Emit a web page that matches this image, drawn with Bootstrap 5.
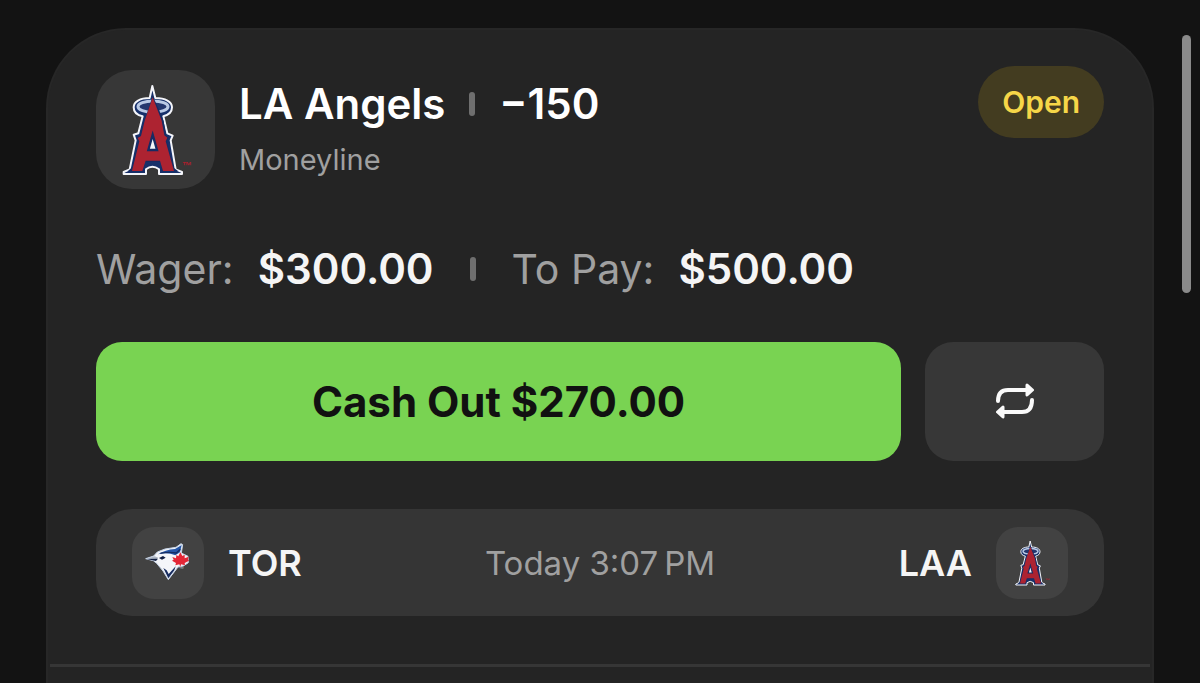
<!DOCTYPE html>
<html lang="en" data-bs-theme="dark">
<head>
<meta charset="utf-8">
<meta name="viewport" content="width=device-width, initial-scale=1">
<title>Bet slip</title>
<link href="https://cdn.jsdelivr.net/npm/bootstrap@5.3.0/dist/css/bootstrap.min.css" rel="stylesheet">
<style>
  body { background: #131313; font-family: Inter, "Liberation Sans", sans-serif; color: #f5f5f5; padding: 28px 46px 0; }
  .slip { background: #242424; border: 2px solid #272727; border-bottom: 0; border-radius: 80px 80px 0 0; }
  .slip-body { padding: 36px 48px 48px; }
  .tile { background: #373737; width: 119px; height: 119px; border-radius: 36px; margin-top: 4px; }
  .tile-sm { background: #424242; width: 72px; height: 72px; border-radius: 22px; }
  .title-lg { font-size: 42px; line-height: 52px; font-weight: 600; }
  .soft { color: #a0a0a0; font-size: 41px; font-weight: 400; }
  .kind { font-size: 29px; line-height: 36px; color: #a0a0a0; margin-top: 12px; }
  .sep { width: 6px; height: 24px; border-radius: 3px; background: #6f6f6f; }
  .status { background: #433c20; color: #f6d648; font-size: 30px; line-height: 36px; font-weight: 600; padding: 18px 24px; border-radius: 36px; }
  .stakes { margin-top: 54px; margin-bottom: 47px; }
  .stakes .sep { margin: 0 36px; }
  .btn-tall { height: 119px; border: 0; border-radius: 26px; }
  .btn-cash { background: #79d352; color: #111; font-size: 42px; font-weight: 700; }
  .btn-cash:hover { background: #88dd63; color: #111; }
  .btn-again { background: #373737; width: 179px; border-radius: 28px; }
  .game { background: #353535; border-radius: 36px; padding: 18px 36px 17px; margin-top: 48px; }
  .team { font-size: 36px; line-height: 44px; font-weight: 600; }
  .when { font-size: 33px; line-height: 40px; color: #a0a0a0; }
  .rule { height: 3px; background: #363636; margin: 0 2px; }
  .thumb { position: fixed; top: 35px; right: 9px; width: 9px; height: 258px; border-radius: 5px; background: #8a8a8a; }
</style>
</head>
<body class="d-flex flex-column min-vh-100">
<svg class="d-none" aria-hidden="true">
  <symbol id="angels" viewBox="90 70 216 276">
    <path d="M187 76L179 112C150 112 131 123 131 140C131 155 143 164 158 167L145 218L131 222L137 239L119 326L101 334V340H168V326Q187 310 207 326V340H276V334L257 326L242 239L248 225L232 218L220 167C236 163 246 154 246 140C246 123 226 112 196 112Z" fill="#17306a" stroke="#f4f5fa" stroke-width="6" stroke-linejoin="round"/>
    <ellipse cx="189" cy="138" rx="45" ry="17" fill="#24376e" stroke="#b9c9e5" stroke-width="9"/>
    <path d="M188 106L205 142L221 181L228 225L235 232L231 243L252 322L265 332H216L212 304H165L160 332H113L127 320L145 243L140 230L151 224L166 173Z" fill="#172b63"/>
    <path d="M188 110L215 180L223 224L232 231L227 242L252 331H219L210 300H167L157 331H126L148 242L143 232L153 226L164 180Z" fill="#ad2331"/>
    <path d="M188 222L201 268H175Z" fill="#f4f5fa" stroke="#172b63" stroke-width="7"/>
    <text x="275" y="324" font-family="Liberation Sans" font-size="30" font-weight="700" fill="#a9202d">™</text>
  </symbol>
</svg>

<main class="slip flex-grow-1">
  <div class="slip-body">
    <header class="d-flex align-items-start">
      <div class="tile d-flex align-items-center justify-content-center flex-shrink-0">
        <svg width="72" height="92" role="img" aria-label="LA Angels"><use href="#angels"/></svg>
      </div>
      <div class="ms-4 mt-2 pt-1 flex-grow-1">
        <h1 class="title-lg d-flex align-items-center mb-0"><span>LA Angels</span><span class="sep mx-4"></span><span>−150</span></h1>
        <div class="kind">Moneyline</div>
      </div>
      <span class="status">Open</span>
    </header>

    <div class="stakes title-lg d-flex align-items-center">
      <span class="soft">Wager:</span><span class="ms-4">$300.00</span>
      <span class="sep"></span>
      <span class="soft">To Pay:</span><span class="ms-4">$500.00</span>
    </div>

    <div class="d-flex gap-4">
      <button type="button" class="btn btn-tall btn-cash flex-grow-1">Cash Out $270.00</button>
      <button type="button" class="btn btn-tall btn-again" aria-label="Bet again">
        <svg width="42" height="42" viewBox="0 0 42 42" fill="none" stroke="#fafafa" stroke-width="4" stroke-linecap="round" stroke-linejoin="round">
          <path d="M4 20C4 12 8 9 14 9H33M38 19C38 28 34 31 28 31H9"/>
          <path d="M33 4L38.500 9L33 14ZM9 26L3.500 31L9 36Z" fill="#fafafa" stroke-width="3"/>
        </svg>
      </button>
    </div>

    <div class="game row g-0 align-items-center">
      <div class="col d-flex align-items-center">
        <div class="tile-sm">
          <svg class="d-block" width="72" height="72" viewBox="20 23 216 216" role="img" aria-label="Toronto Blue Jays">
            <path d="M61 118L85 110L96 98L119 89L152 84L167 73L172 76L168 101L188 111L189 130L174 140L158 143L129 181L113 155L94 132L84 124Z" fill="#f4f6fa" stroke="#c6d4e8" stroke-width="3" stroke-linejoin="round"/>
            <path d="M98 105Q119 91 149 89L169 77L164 99L150 108Q126 97 98 105Z" fill="#2456a8"/>
            <path d="M105 102Q130 97 153 101L165 90" fill="none" stroke="#152d62" stroke-width="4"/>
            <path d="M64 118L88 111L99 115L90 122Z" fill="#aab4c2"/>
            <path d="M64 119L98 118L92 125ZM101 116L113 110L121 115L110 121Z" fill="#111f43"/>
            <path d="M114 146L124 153L130 164L151 141L147 153L129 177Z" fill="#172c60"/>
            <path d="M165 99L171 110L178 106L178 117L190 112L188 120L191 124L178 131L179 138L167 135L165 143L162 135L150 138L152 131L140 124L145 121L141 113L152 117L153 107L159 111Z" fill="#e32636"/>
            <text x="161" y="151" font-family="Liberation Sans" font-size="14" fill="#b7bdc7">™</text>
          </svg>
        </div>
        <span class="team ms-4">TOR</span>
      </div>
      <div class="col-auto when">Today 3:07&#8239;PM</div>
      <div class="col d-flex align-items-center justify-content-end">
        <span class="team me-4">LAA</span>
        <div class="tile-sm d-flex align-items-center justify-content-center">
          <svg width="36" height="46" role="img" aria-label="LA Angels"><use href="#angels"/></svg>
        </div>
      </div>
    </div>
  </div>
  <div class="rule"></div>
</main>
<div class="thumb"></div>
<script src="https://cdn.jsdelivr.net/npm/bootstrap@5.3.0/dist/js/bootstrap.bundle.min.js"></script>
</body>
</html>
